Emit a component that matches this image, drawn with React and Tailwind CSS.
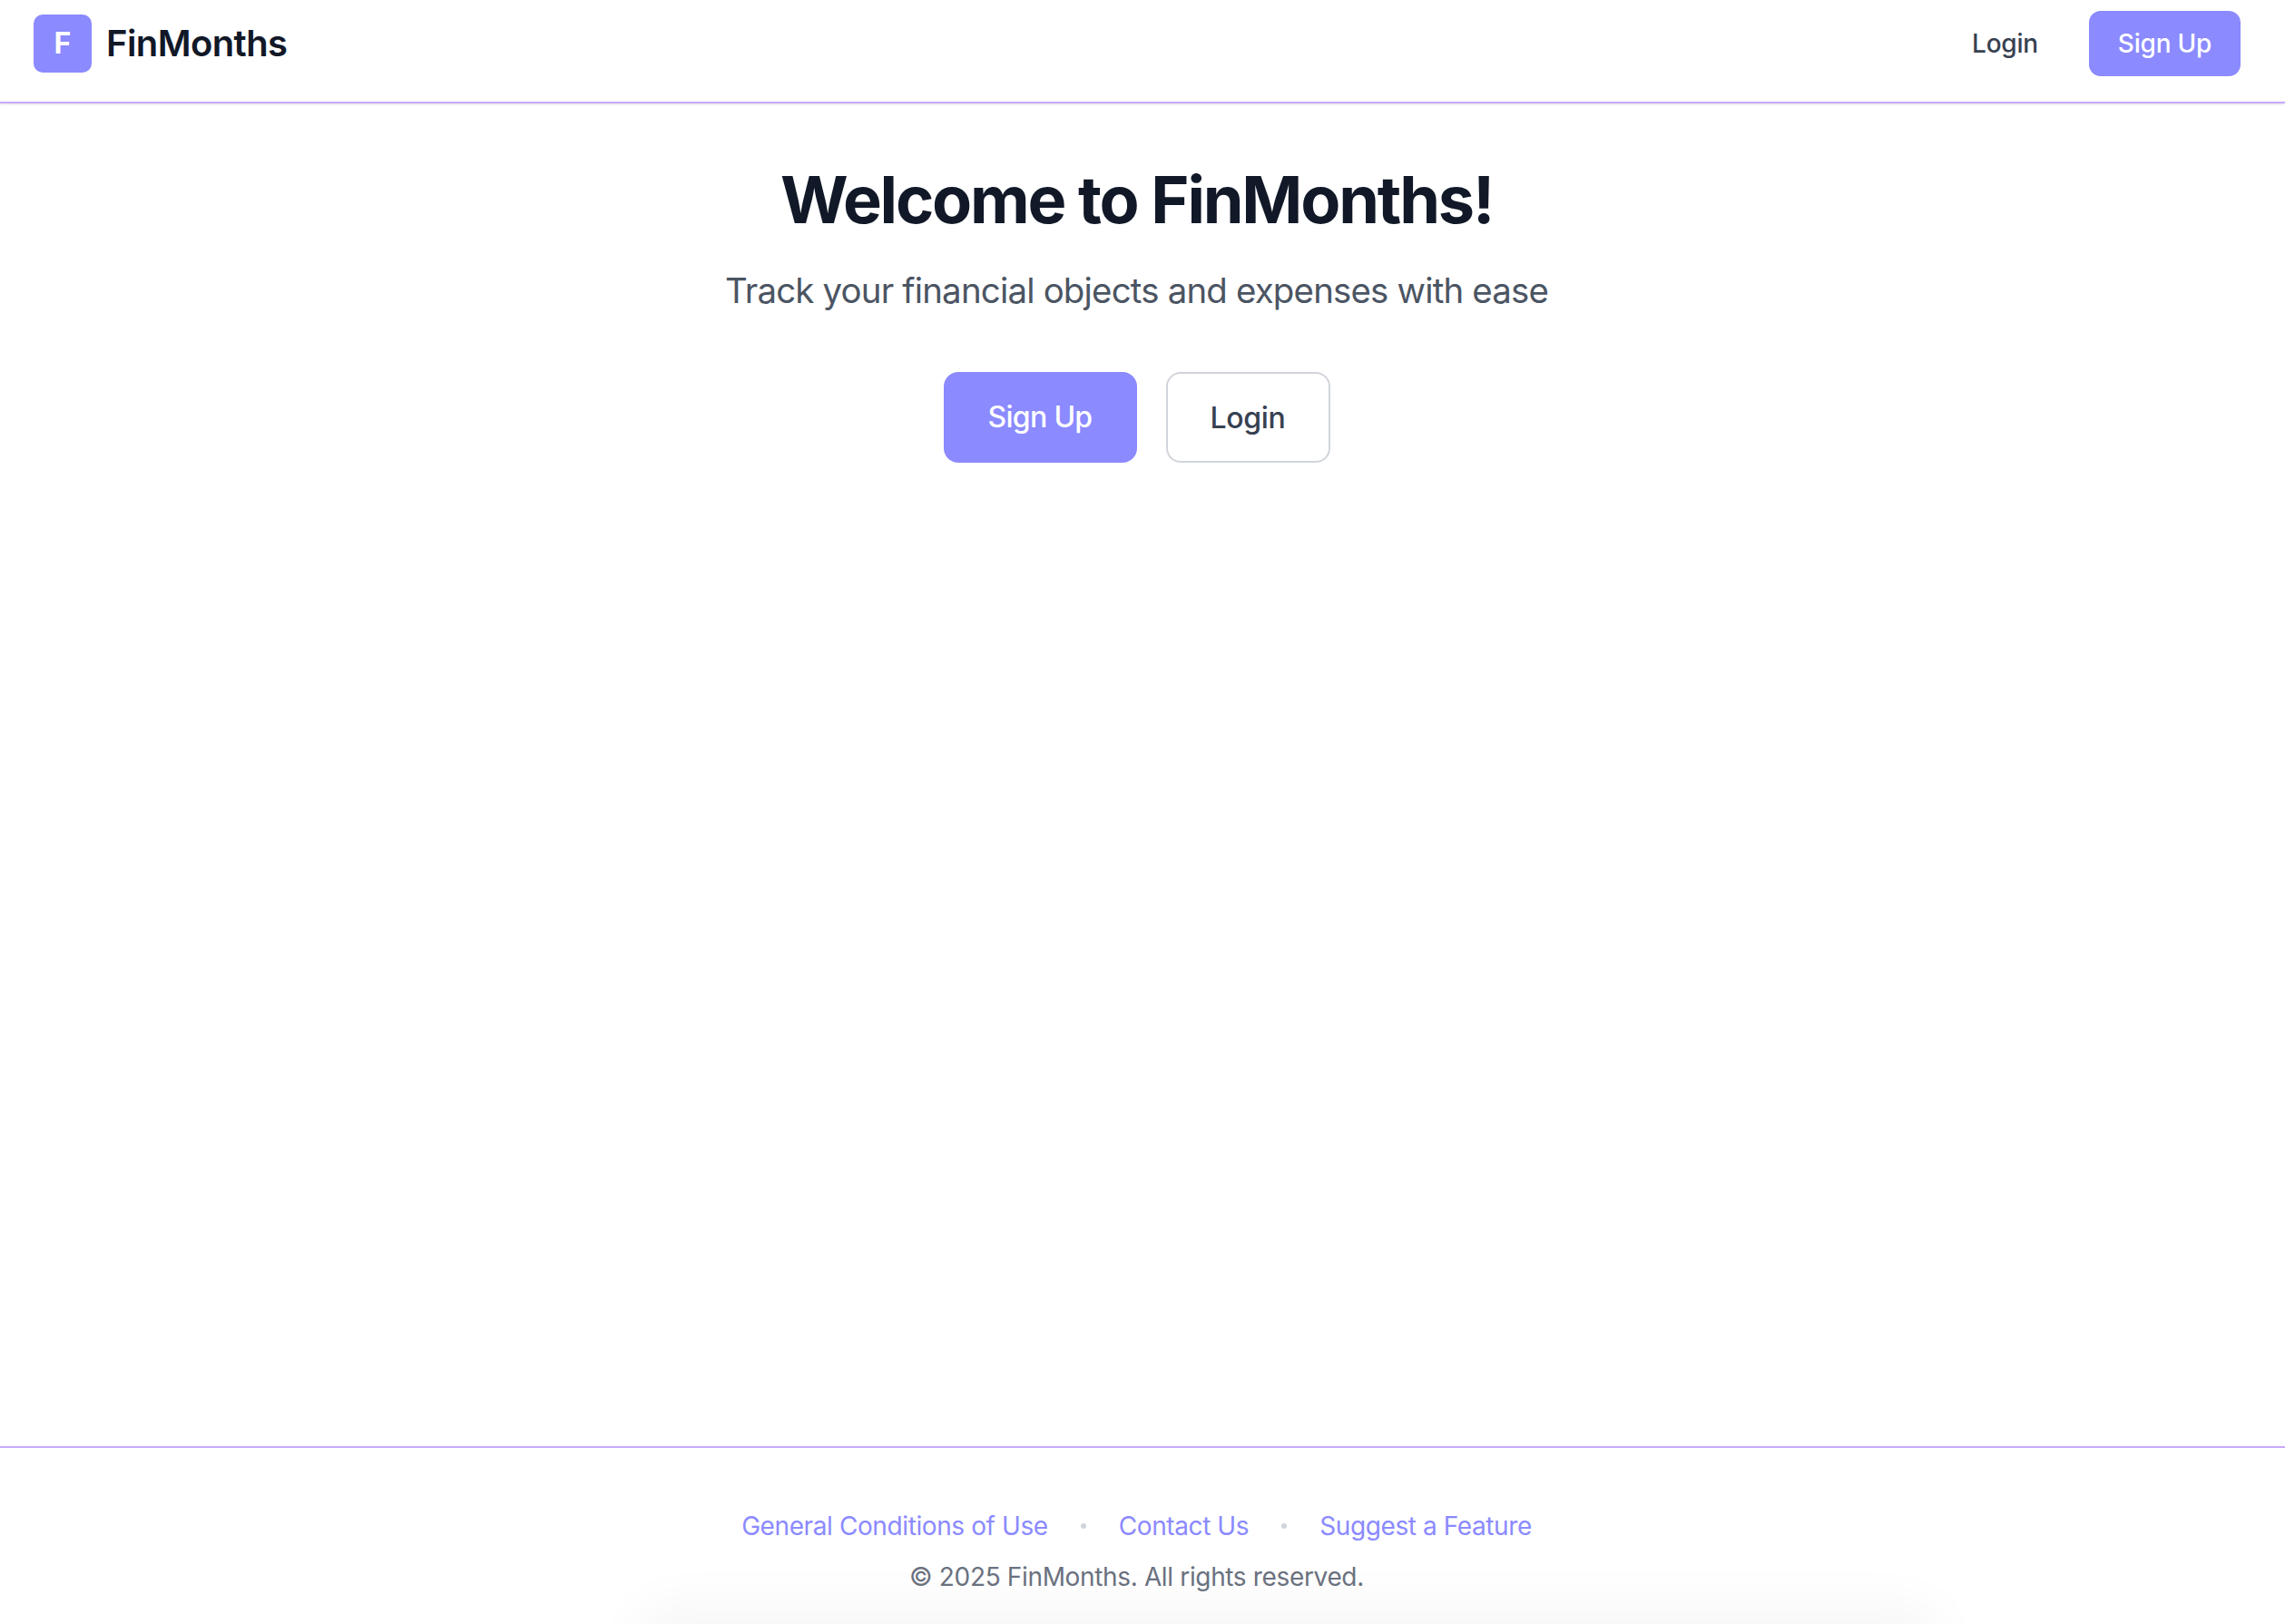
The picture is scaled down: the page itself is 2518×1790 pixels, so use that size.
import React from 'react';

const App = () => {
  return (
    <div className="relative flex h-[1790px] flex-col overflow-hidden bg-white font-['Inter',sans-serif]">
      <header className="flex h-[114px] shrink-0 items-center justify-between border-b-2 border-[#c9aaff] pl-[37px] pr-[49px] pb-4 shadow-sm">
        <div className="flex items-center gap-4">
          <div className="flex h-16 w-16 items-center justify-center rounded-[10px] bg-[#8b8aff] text-[32px] font-bold text-white">
            F
          </div>
          <span className="text-[40px] font-semibold tracking-[-0.6px] text-[#111827]">FinMonths</span>
        </div>
        <div className="flex items-center gap-[32px]">
          <a className="px-6 text-[28px] font-medium tracking-[-0.2px] text-[#374151]">Login</a>
          <a className="flex h-[72px] w-[167px] items-center justify-center rounded-[13px] bg-[#8b8aff] text-[28px] font-medium tracking-[-0.2px] text-white">
            Sign Up
          </a>
        </div>
      </header>

      <main className="flex flex-1 flex-col items-center pt-[61px] pr-[13px]">
        <h1 className="text-[72px] leading-[90px] font-bold tracking-[-2.2px] text-[#111827]">Welcome to FinMonths!</h1>
        <p className="mt-[25px] text-[38.4px] leading-[60px] tracking-[-0.8px] text-[#4b5563]">Track your financial objects and expenses with ease</p>
        <div className="mt-[60px] flex gap-[32px]">
          <a className="flex h-[100px] w-[213px] items-center justify-center rounded-[16px] bg-[#8b8aff] text-[32px] font-medium tracking-[-0.7px] text-white">
            Sign Up
          </a>
          <a className="flex h-[100px] w-[181px] items-center justify-center rounded-[16px] border-2 border-[#d1d5db] bg-white pt-[2px] text-[32px] font-medium tracking-[-0.3px] text-[#374151]">
            Login
          </a>
        </div>
      </main>

      <footer className="flex h-[196px] shrink-0 flex-col items-center border-t-2 border-[#c9aaff] pt-[64px] pr-[13px]">
        <div className="flex items-center text-[28px] leading-[44px] tracking-[-0.4px] text-[#8b8aff]">
          <a>General Conditions of Use</a>
          <span className="mx-[36px] h-[6px] w-[6px] rounded-full bg-[#d1d5db]"></span>
          <a>Contact Us</a>
          <span className="mx-[36px] h-[6px] w-[6px] rounded-full bg-[#d1d5db]"></span>
          <a>Suggest a Feature</a>
        </div>
        <p className="mt-[12px] text-[28px] leading-[44px] tracking-[-0.35px] text-[#6b7280]">© 2025 FinMonths. All rights reserved.</p>
      </footer>

      <div className="absolute bottom-[-40px] left-[720px] h-[40px] w-[1400px] rounded-full shadow-[0_0_60px_20px_rgba(0,0,0,0.04)]"></div>
    </div>
  );
};

export default App;
